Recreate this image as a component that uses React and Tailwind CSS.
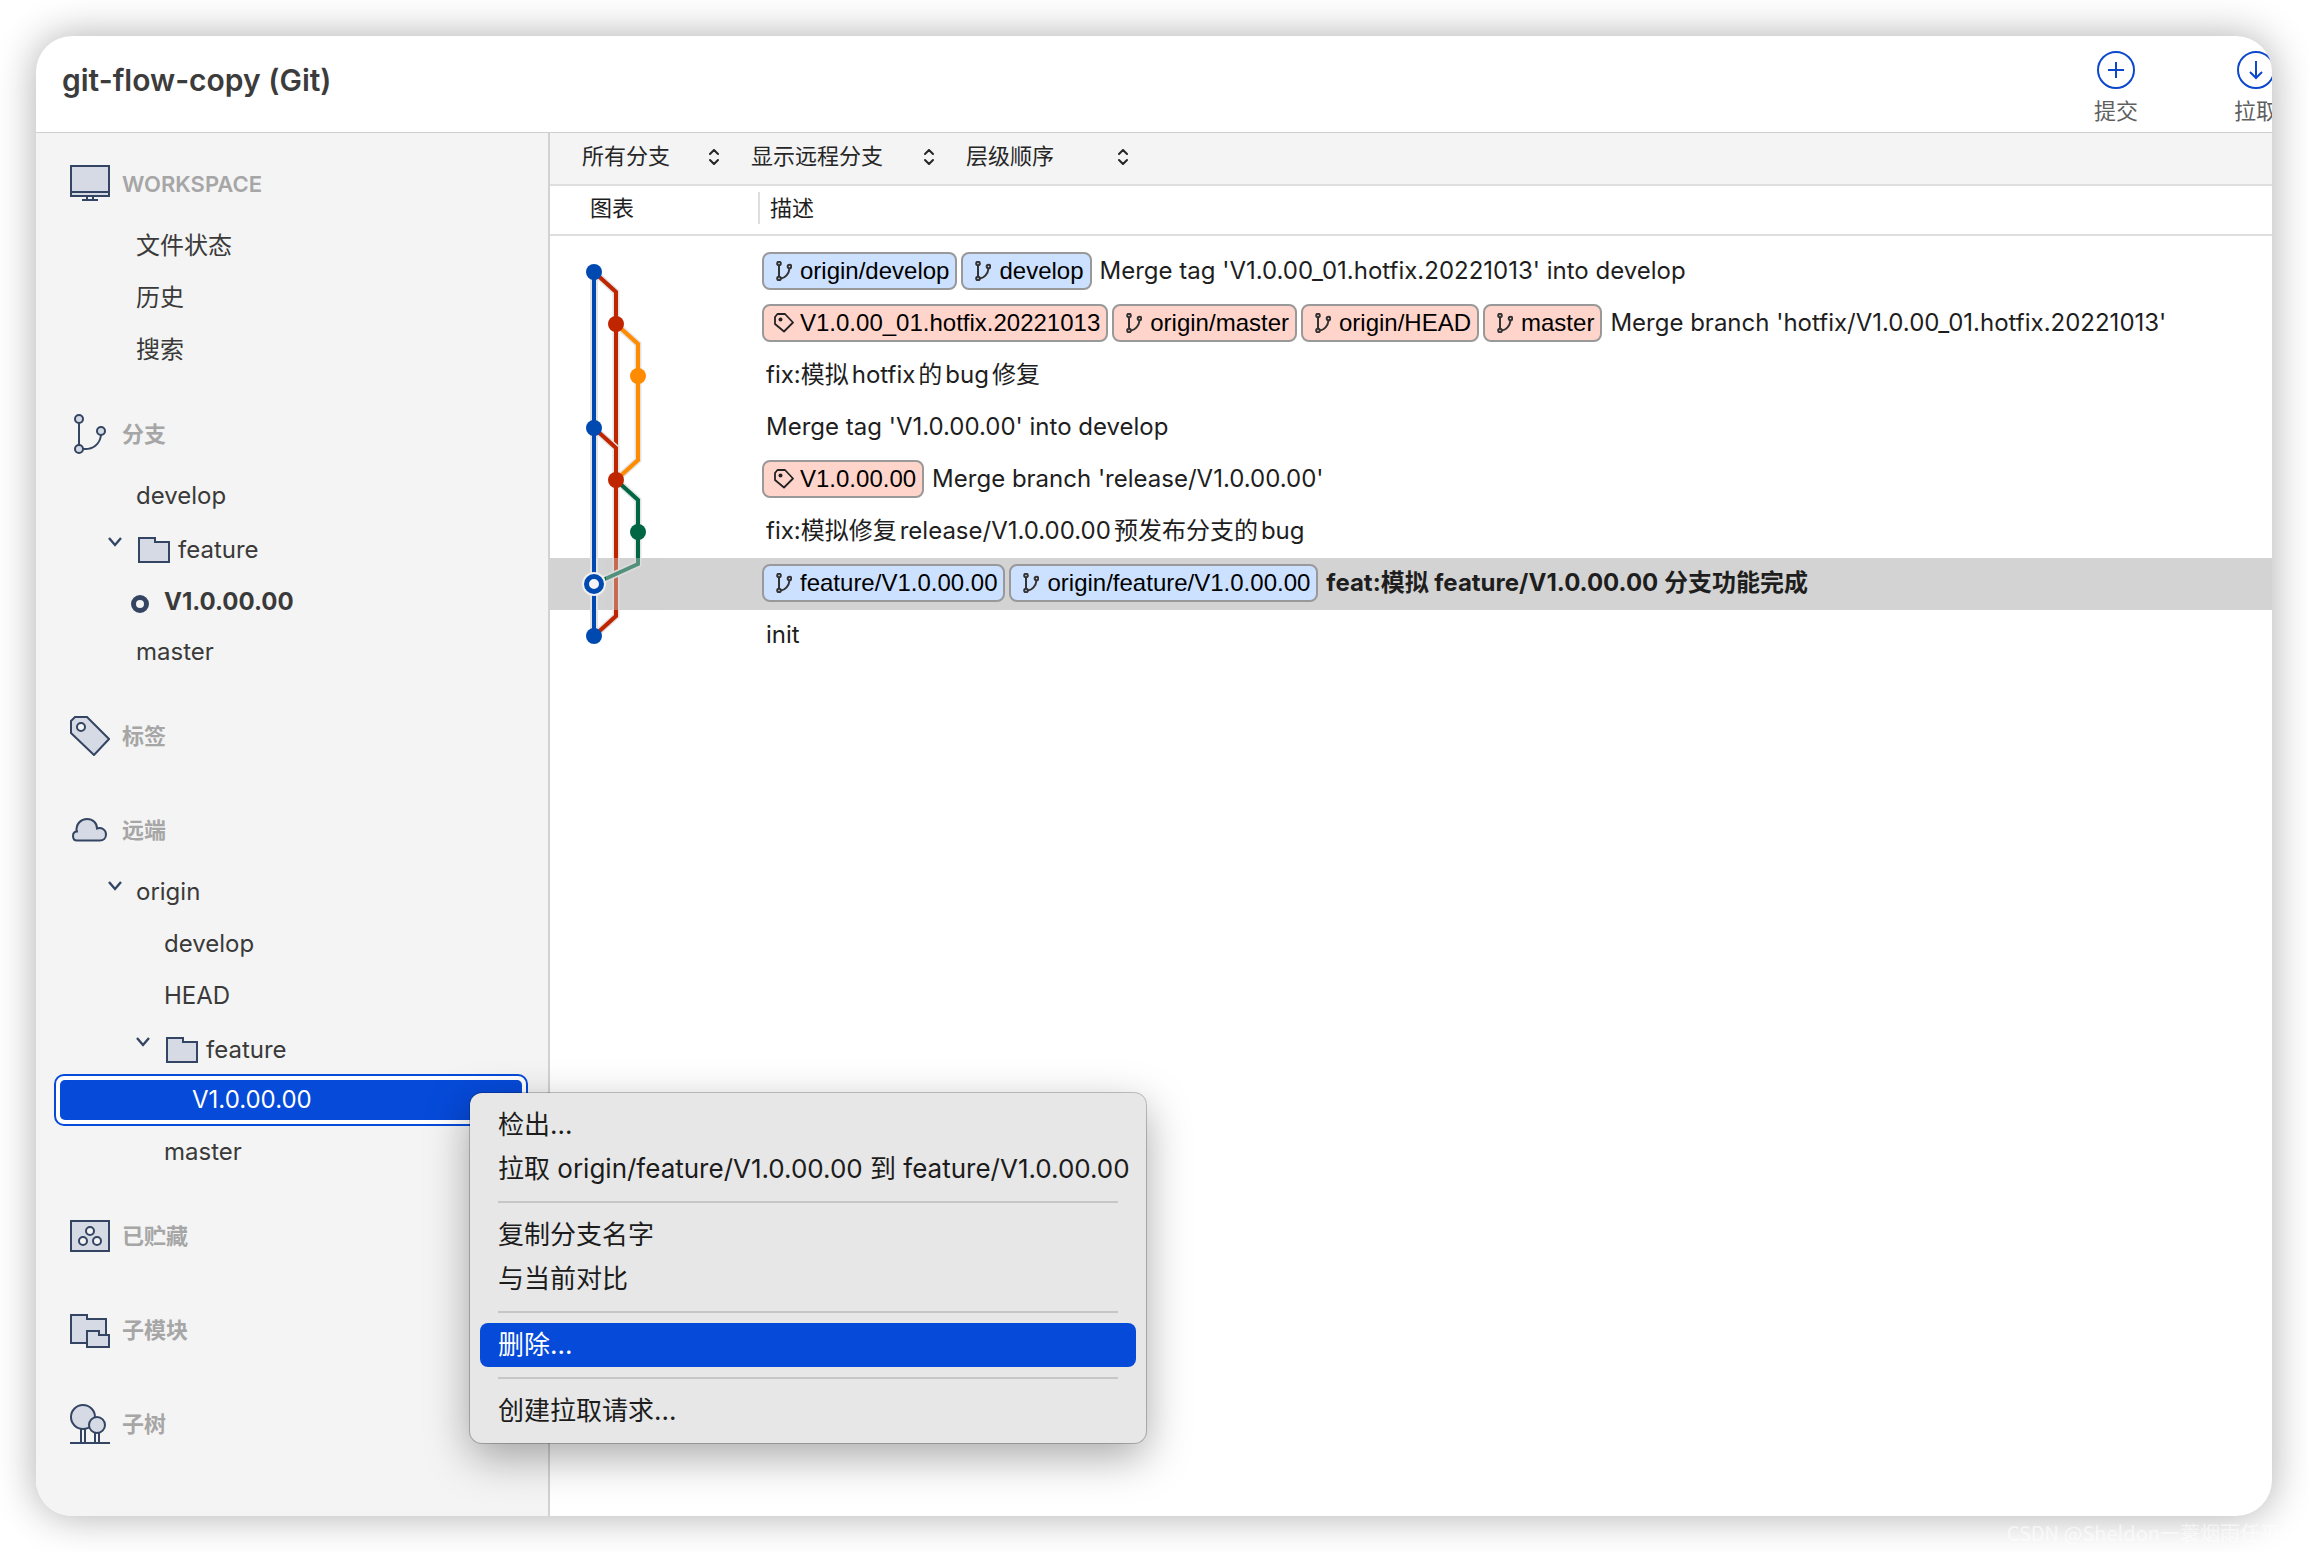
import clsx from 'clsx'

const ROW_HEIGHT = 52

const filters = [
    { label: '分支范围', value: '所有分支', width: 'w-[137px]' },
    { label: '远程分支', value: '显示远程分支', width: 'w-[183px]' },
    { label: '排序', value: '层级顺序', width: 'w-[162px]' },
]

const commits = [
    {
        tags: [
            { name: 'origin/develop', kind: 'branch', color: 'blue' },
            { name: 'develop', kind: 'branch', color: 'blue' },
        ],
        text: "Merge tag 'V1.0.00_01.hotfix.20221013' into develop",
    },
    {
        tags: [
            { name: 'V1.0.00_01.hotfix.20221013', kind: 'tag', color: 'red' },
            { name: 'origin/master', kind: 'branch', color: 'red' },
            { name: 'origin/HEAD', kind: 'branch', color: 'red' },
            { name: 'master', kind: 'branch', color: 'red' },
        ],
        text: "Merge branch 'hotfix/V1.0.00_01.hotfix.20221013'",
    },
    { tags: [], text: 'fix:模拟hotfix的bug修复' },
    { tags: [], text: "Merge tag 'V1.0.00.00' into develop" },
    {
        tags: [{ name: 'V1.0.00.00', kind: 'tag', color: 'red' }],
        text: "Merge branch 'release/V1.0.00.00'",
    },
    { tags: [], text: 'fix:模拟修复release/V1.0.00.00预发布分支的bug' },
    {
        tags: [
            { name: 'feature/V1.0.00.00', kind: 'branch', color: 'blue' },
            { name: 'origin/feature/V1.0.00.00', kind: 'branch', color: 'blue' },
        ],
        text: 'feat:模拟 feature/V1.0.00.00 分支功能完成',
        selected: true,
    },
    { tags: [], text: 'init' },
]

/* ---------- sidebar icons ---------- */

const SidebarIcon = ({ children }) => (
    <svg width="40" height="40" viewBox="0 0 40 40" fill="#d6dae4" stroke="#344563" strokeWidth="2" className="shrink-0" aria-hidden="true">
        {children}
    </svg>
)

const MonitorIcon = () => (
    <SidebarIcon>
        <rect x="1" y="2" width="38" height="30" />
        <path d="M1 28H39M17 32V36M23 32V36M12 36H28" />
    </SidebarIcon>
)

const BranchIcon = () => (
    <SidebarIcon>
        <path d="M9 9V31M31 21C30 30 23 36 13 35" fill="none" />
        <circle cx="9" cy="5" r="4" />
        <circle cx="9" cy="35" r="4" />
        <circle cx="31" cy="17" r="4" />
    </SidebarIcon>
)

const TagIcon = () => (
    <SidebarIcon>
        <path d="M5 1H17L39 23L24 39L1 17V5Z" />
        <circle cx="11" cy="11" r="4" fill="#f4f4f4" />
    </SidebarIcon>
)

const CloudIcon = () => (
    <SidebarIcon>
        <path d="M8 21.5H6.5C6 13.5 11 9 17 9C23 9 27 13 27 18.5C32 17 36 20 36 24.5C36 28 33.5 30.5 30 30.5H7C4.5 30.5 3 29 3 26C3 23 4.5 21.5 7 21.5" />
    </SidebarIcon>
)

const StashIcon = () => (
    <SidebarIcon>
        <rect x="1" y="5" width="38" height="30" />
        <g fill="#f4f4f4">
            <circle cx="20" cy="15" r="4" />
            <circle cx="13" cy="25" r="4" />
            <circle cx="27" cy="25" r="4" />
        </g>
    </SidebarIcon>
)

const SubmoduleIcon = () => (
    <SidebarIcon>
        <path d="M1 5H17V9H36V33H1Z" />
        <path d="M17 21H29V25H39V37H17Z" />
    </SidebarIcon>
)

const SubtreeIcon = () => (
    <SidebarIcon>
        <path d="M11 24V39M15 24V39M25 28V39M29 28V39M0 39H40" />
        <circle cx="13" cy="13" r="12" />
        <circle cx="27" cy="21" r="8" />
    </SidebarIcon>
)

const FolderIcon = () => (
    <svg width="32" height="26" viewBox="0 0 32 26" fill="#d6dae4" stroke="#344563" strokeWidth="2" className="shrink-0" aria-hidden="true">
        <path d="M1 1H17V5H31V25H1Z" />
    </svg>
)

const Chevron = () => (
    <svg width="14" height="10" viewBox="0 0 14 10" fill="none" stroke="#344563" strokeWidth="2.4" className="mb-3 shrink-0" aria-hidden="true">
        <path d="M1 1L7 8L13 1" />
    </svg>
)

/* ---------- small glyphs ---------- */

const MiniBranch = () => (
    <svg width="16" height="20" viewBox="0 0 16 20" fill="none" stroke="#333" strokeWidth="2" className="ml-[2px] shrink-0" aria-hidden="true">
        <path d="M3 4.5V15.500M13.5 7.5C13 13 9 17 5 17.5" />
        <circle cx="3" cy="2.500" r="1.800" />
        <circle cx="3" cy="17.500" r="1.800" />
        <circle cx="13.500" cy="5.500" r="1.800" />
    </svg>
)

const MiniTag = () => (
    <svg width="20" height="20" viewBox="0 0 20 20" fill="none" stroke="#222" strokeWidth="1.8" strokeLinejoin="round" className="shrink-0" aria-hidden="true">
        <path d="M3.5 1H11L19 9.5L10 18.5L1 11V4Z" />
        <circle cx="6.500" cy="6.500" r="2" fill="#222" stroke="none" />
    </svg>
)

const UpDown = () => (
    <svg width="10" height="16" viewBox="0 0 10 16" fill="none" stroke="#262626" strokeWidth="2" strokeLinecap="round" strokeLinejoin="round" className="pointer-events-none absolute right-0 top-1/2 -translate-y-1/2" aria-hidden="true">
        <path d="M1 5L5 1L9 5M1 11L5 15L9 11" />
    </svg>
)

/* ---------- header ---------- */

const ToolButton = ({ label, d }) => (
    <button type="button" className="flex w-[140px] shrink-0 flex-col items-center gap-2 text-[22px] leading-[28px] text-[#5f5f5f]">
        <svg width="38" height="38" viewBox="0 0 38 38" fill="none" stroke="#0b48cc" strokeWidth="2" aria-hidden="true">
            <circle cx="19" cy="19" r="18" />
            <path d={d} />
        </svg>
        {label}
    </button>
)

const Header = () => (
    <header className="flex h-[97px] shrink-0 items-center justify-between border-b border-[#cfcfcf] pl-[26px]">
        <h1 className="pb-2 text-[30px] font-semibold text-[#3c3c3c]">git-flow-copy (Git)</h1>
        {/* the last action runs past the window edge */}
        <div className="-mr-[54px] flex pt-2">
            <ToolButton label="提交" d="M19 11V27M11 19H27" />
            <ToolButton label="拉取" d="M19 10V27M13 21L19 27L25 21" />
        </div>
    </header>
)

/* ---------- sidebar ---------- */

const Section = ({ icon, title, children }) => (
    <section>
        <h2 className="flex h-[52px] items-center gap-3 pl-[34px] text-[22px] font-semibold text-[#a6a6a6]">
            {icon}
            {title}
        </h2>
        <ul className="mt-[10px] text-[24px] text-[#3a3a3a]">{children}</ul>
    </section>
)

const levels = ['pl-[72px]', 'pl-[100px]']

const Item = ({ level = 0, open, folder, current, children }) => (
    <li>
        <button type="button" aria-expanded={open} className={clsx('flex h-[52px] w-full items-center text-left', levels[level], current && 'pt-1 font-bold')}>
            <span className={clsx('shrink-0', current ? '-ml-[5px] w-[33px]' : 'w-[28px]')}>
                {open && <Chevron />}
                {current && <span className="mt-1 block size-[18px] rounded-full border-[5px] border-[#344563]" />}
            </span>
            {folder ? (
                <span className="flex items-center gap-2 pl-[2px] pt-1">
                    <FolderIcon />
                    {children}
                </span>
            ) : (
                children
            )}
        </button>
    </li>
)

const MenuItem = ({ active, children }) => (
    <button
        type="button"
        role="menuitem"
        className={clsx('block h-[44px] w-full whitespace-nowrap rounded-lg px-[18px] text-left text-[26px] leading-[44px]', active ? 'bg-[#064ad9] text-white' : 'text-[#1c1c1c]')}
    >
        {children}
    </button>
)

const MenuLine = () => <hr className="mx-[18px] my-[10px] border-t-2 border-[#c6c6c6]" />

const ContextMenu = () => (
    <div role="menu" className="absolute left-[416px] top-[19px] z-20 w-[676px] rounded-xl bg-[#e7e7e7] p-[10px] shadow-[0_0_0_1px_rgba(0,0,0,0.22),0_14px_44px_rgba(0,0,0,0.34)]">
        <MenuItem>检出...</MenuItem>
        <MenuItem>拉取 origin/feature/V1.0.00.00 到 feature/V1.0.00.00</MenuItem>
        <MenuLine />
        <MenuItem>复制分支名字</MenuItem>
        <MenuItem>与当前对比</MenuItem>
        <MenuLine />
        <MenuItem active>删除...</MenuItem>
        <MenuLine />
        <MenuItem>创建拉取请求...</MenuItem>
    </div>
)

const Sidebar = () => (
    <nav className="relative z-10 flex w-[514px] shrink-0 flex-col gap-[32px] border-r-2 border-[#d2d2d2] bg-[#f4f4f4] pt-[25px]">
        <Section icon={<MonitorIcon />} title="WORKSPACE">
            <Item>文件状态</Item>
            <Item>历史</Item>
            <Item>搜索</Item>
        </Section>
        <Section icon={<BranchIcon />} title="分支">
            <Item>develop</Item>
            <Item open folder>feature</Item>
            <Item level={1} current>V1.0.00.00</Item>
            <Item>master</Item>
        </Section>
        <Section icon={<TagIcon />} title="标签" />
        <Section icon={<CloudIcon />} title="远端">
            <Item open>origin</Item>
            <Item level={1}>develop</Item>
            <Item level={1}>HEAD</Item>
            <Item level={1} open folder>feature</Item>
            <li className="relative ml-[18px] w-[474px]">
                <button type="button" className="block h-[52px] w-full rounded-[10px] border-2 border-[#064ad9] bg-white p-1">
                    <span className="block h-[40px] rounded-[5px] bg-[#064ad9] pl-[132px] text-left leading-[40px] text-white">V1.0.00.00</span>
                </button>
                <ContextMenu />
            </li>
            <Item level={1}>master</Item>
        </Section>
        <Section icon={<StashIcon />} title="已贮藏" />
        <Section icon={<SubmoduleIcon />} title="子模块" />
        <Section icon={<SubtreeIcon />} title="子树" />
    </nav>
)

/* ---------- history ---------- */

const Tag = ({ name, kind, color }) => (
    <span className={clsx('flex h-[38px] shrink-0 items-center rounded-lg border-2 border-[#999] pl-[10px] pr-[6px] font-["Liberation_Sans",sans-serif] text-black', color === 'blue' ? 'bg-[#cce0ff]' : 'bg-[#ffd5cb]')}>
        <span className="flex w-[26px]">{kind === 'tag' ? <MiniTag /> : <MiniBranch />}</span>
        {name}
    </span>
)

const y = (row) => row * ROW_HEIGHT + ROW_HEIGHT / 2

const lines = [
    { color: '#bf2600', points: [[44, y(0)], [66, y(0) + 20], [66, y(7) - 20], [44, y(7)]] },
    { color: '#bf2600', points: [[44, y(3)], [66, y(3) + 20], [66, y(4)]] },
    { color: '#ff8b00', points: [[66, y(1)], [88, y(1) + 20], [88, y(4) - 20], [66, y(4)]] },
    { color: '#006644', points: [[66, y(4)], [88, y(4) + 20], [88, y(6) - 20], [44, y(6)]] },
]

const nodes = [
    { cx: 44, row: 0, color: '#0049b0' },
    { cx: 66, row: 1, color: '#bf2600' },
    { cx: 88, row: 2, color: '#ff8b00' },
    { cx: 44, row: 3, color: '#0049b0' },
    { cx: 66, row: 4, color: '#bf2600' },
    { cx: 88, row: 5, color: '#006644' },
    { cx: 44, row: 7, color: '#0049b0' },
]

const Graph = () => (
    <svg width="110" height="416" viewBox="0 0 110 416" fill="none" className="pointer-events-none absolute left-0 top-[10px]" aria-hidden="true">
        {lines.map(({ color, points }, i) => (
            <g key={i}>
                <polyline points={points.join(' ')} stroke="#e3e3e3" strokeWidth="7" />
                <polyline points={points.join(' ')} stroke={color} strokeWidth="4" />
            </g>
        ))}
        {/* the selected row dims everything but the checked-out lane */}
        <rect x="56" y={6 * ROW_HEIGHT} width="54" height={ROW_HEIGHT} fill="#d3d3d3" fillOpacity="0.4" />
        <path d={`M44 ${y(0)}V${y(7)}`} stroke="#e3e3e3" strokeWidth="8" />
        <path d={`M44 ${y(0)}V${y(7)}`} stroke="#0049b0" strokeWidth="4" />
        {nodes.map(({ cx, row, color }) => (
            <circle key={row} cx={cx} cy={y(row)} r="8" fill={color} />
        ))}
        <circle cx="44" cy={y(6)} r="12" fill="#f0f0f0" />
        <circle cx="44" cy={y(6)} r="7.500" fill="#f4f4f4" stroke="#0049b0" strokeWidth="5" />
    </svg>
)

const History = () => (
    <main className="min-w-0 flex-1">
        <div className="flex h-[53px] gap-8 border-b-2 border-[#dedede] bg-[#f4f4f4] pb-1 pl-[32px] text-[22px] text-[#262626]">
            {filters.map(({ label, value, width }) => (
                <div key={label} className={clsx('relative flex', width)}>
                    <select aria-label={label} className="w-full appearance-none bg-transparent">
                        <option>{value}</option>
                    </select>
                    <UpDown />
                </div>
            ))}
        </div>
        <table className="w-full table-fixed border-collapse text-left text-[#1e1e1e]">
            <colgroup>
                <col className="w-[210px]" />
                <col />
            </colgroup>
            <thead>
                <tr className="h-[49px] border-b-2 border-[#dedede] text-[22px]">
                    <th scope="col" className="p-0 pb-1 font-normal">
                        <div className="flex h-8 items-center border-r-2 border-[#dedede] pl-[40px]">图表</div>
                    </th>
                    <th scope="col" className="p-0 pb-1 pl-[10px] font-normal">描述</th>
                </tr>
            </thead>
        </table>
        <div className="relative pt-[10px] text-[#1e1e1e]">
            <table className="w-full table-fixed border-collapse text-left" aria-label="提交历史">
                <colgroup>
                    <col className="w-[212px]" />
                    <col />
                </colgroup>
                <tbody>
                    {commits.map(({ tags, text, selected }) => (
                        <tr key={text} className={clsx('h-[52px]', selected && 'bg-[#d3d3d3] font-bold')}>
                            <td />
                            <td className="p-0">
                                <div className="flex items-center whitespace-nowrap pb-[2px] text-[24px] leading-[38px]">
                                    {tags.length > 0 && (
                                        <span className="mr-2 flex gap-1 font-normal">
                                            {tags.map((tag) => <Tag key={tag.name} {...tag} />)}
                                        </span>
                                    )}
                                    <span className={clsx('[text-autospace:normal]', tags.length === 0 && 'pl-1')}>{text}</span>
                                </div>
                            </td>
                        </tr>
                    ))}
                </tbody>
            </table>
            <Graph />
        </div>
    </main>
)

export default function App() {
    return (
        <div className='relative flex min-h-screen bg-white p-9 font-["Inter","Noto_Sans_CJK_SC",sans-serif]'>
            <div className="flex min-w-0 flex-1 flex-col overflow-hidden rounded-[36px] bg-white shadow-[0_0_40px_rgba(0,0,0,0.32)]">
                <Header />
                <div className="flex flex-1">
                    <Sidebar />
                    <History />
                </div>
            </div>
            <p className='absolute bottom-[4px] right-[8px] font-["Noto_Sans_CJK_SC",sans-serif] text-[20px] leading-[30px] text-white/60'>CSDN @Sheldon一蓑烟雨任平生</p>
        </div>
    )
}
